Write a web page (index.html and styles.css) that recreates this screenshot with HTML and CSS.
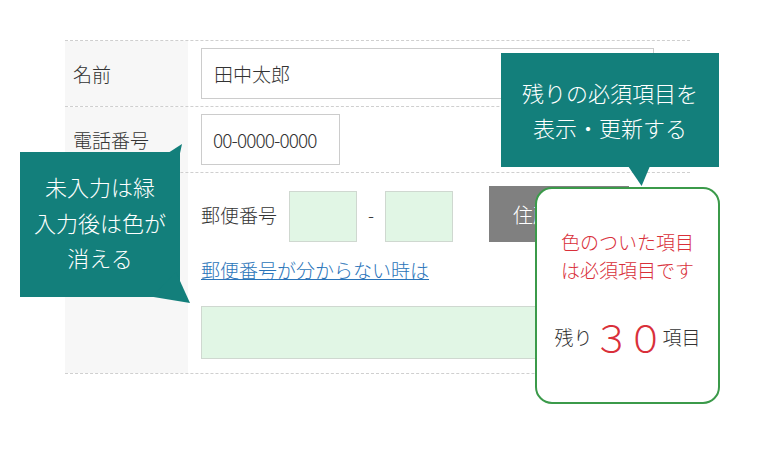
FILE: index.html
```html
<!DOCTYPE html>
<html lang="ja">
<head>
<meta charset="utf-8">
<link rel="stylesheet" href="styles.css">
</head>
<body>
<div class="stage">
  <div class="form">
    <div class="row">
      <div class="label">名前</div>
      <div class="cell"><div class="input wide">田中太郎</div></div>
    </div>
    <div class="row">
      <div class="label">電話番号</div>
      <div class="cell"><div class="input tel">00-0000-0000</div></div>
    </div>
    <div class="row addr">
      <div class="label"></div>
      <div class="cell addr-cell">
        <div class="zip">
          <span class="zip-label">郵便番号</span>
          <span class="input req zip-box"></span>
          <span class="dash">-</span>
          <span class="input req zip-box"></span>
          <span class="btn">住所検索</span>
        </div>
        <a class="link" href="#">郵便番号が分からない時は</a>
        <div class="input req wide big"></div>
      </div>
    </div>
  </div>

  <div class="tip tip-right">残りの必須項目を<br>表示・更新する</div>
  <div class="tip tip-left">未入力は緑<br>入力後は色が<br>消える</div>

  <div class="counter">
    <p class="note">色のついた項目<br>は必須項目です</p>
    <p class="remain">残り<span class="num">３０</span>項目</p>
  </div>
</div>
</body>
</html>
```

FILE: styles.css
```css
* { box-sizing: border-box; }
html, body { margin: 0; padding: 0; background: #fff; }
body {
  font-family: "Noto Sans CJK JP", "Noto Sans", sans-serif;
  font-weight: 300;
  color: #333;
  width: 760px;
  height: 449px;
  overflow: hidden;
}
.stage { position: relative; width: 760px; height: 449px; padding-top: 40px; }

.form {
  margin-left: 65px;
  width: 625px;
  border-bottom: 1px dashed #cfcfcf;
}
.row {
  display: grid;
  grid-template-columns: 123px 1fr;
  border-top: 1px dashed #cfcfcf;
}
.label {
  background: #f7f7f7;
  padding-left: 8px;
  font-size: 19px;
  display: flex;
  align-items: center;
}
.cell { padding: 7px 0 7px 13px; }
.input {
  display: flex;
  align-items: center;
  height: 51px;
  border: 1px solid #cccccc;
  background: #fff;
  font-size: 19px;
  padding-left: 12px;
}
.wide { width: 453px; }
.tel { width: 139px; letter-spacing: -0.9px; padding-left: 11px; }
.req { background: #e1f6e5; border-color: #cfd8d0; }

.addr-cell { padding: 13px 0 14px 13px; display: flex; flex-direction: column; align-items: flex-start; }
.zip { display: flex; align-items: center; height: 56px; }
.zip-label { font-size: 19px; margin-right: 12px; }
.zip-box { width: 68px; height: 51px; margin-top: 5px; padding: 0; }
.dash { width: 28px; text-align: center; font-size: 18px; }
.btn {
  margin-left: 36px;
  height: 56px;
  width: 140px;
  background: #808080;
  color: #fff;
  font-size: 20px;
  display: flex;
  align-items: center;
  padding-left: 24px;
}
.link {
  margin-top: 14px;
  font-size: 19px;
  line-height: 28px;
  color: #2a74b9;
  text-decoration: underline;
}
.big { margin-top: 22px; height: 53px; }

.tip {
  position: absolute;
  background: #137f7b;
  color: #fff;
  font-size: 22px;
  text-align: center;
}
.tip-right {
  left: 501px;
  top: 53px;
  width: 218px;
  height: 114px;
  line-height: 35px;
  padding-top: 22px;
}
.tip-right::after {
  content: "";
  position: absolute;
  left: 127px;
  top: 113px;
  width: 22px;
  height: 20px;
  background: #137f7b;
  clip-path: polygon(0 0, 100% 0, 62% 100%);
}
.tip-left {
  left: 20px;
  top: 152px;
  width: 160px;
  height: 145px;
  line-height: 35.5px;
  padding-top: 17px;
}
.tip-left::before {
  content: "";
  position: absolute;
  left: 148px;
  top: -8px;
  width: 14px;
  height: 9px;
  background: #137f7b;
  clip-path: polygon(0 100%, 100% 0, 86% 100%);
}
.tip-left::after {
  content: "";
  position: absolute;
  left: 132px;
  top: 120px;
  width: 38px;
  height: 31px;
  background: #137f7b;
  clip-path: polygon(0 80%, 63% 0, 100% 100%);
}

.counter {
  position: absolute;
  left: 535px;
  top: 187px;
  width: 185px;
  height: 217px;
  border: 2px solid #3b9a4a;
  border-radius: 17px;
  background: #fff;
  text-align: center;
  padding-top: 39px;
}
.note {
  margin: 0;
  color: #d9303a;
  font-size: 19px;
  line-height: 28px;
}
.remain {
  margin: 28px 0 0;
  font-size: 19px;
  line-height: 50px;
  height: 50px;
  display: flex;
  justify-content: center;
  align-items: center;
}
.num {
  color: #d9303a;
  font-size: 38px;
  letter-spacing: -4px;
  margin-right: 2px;
}
```
